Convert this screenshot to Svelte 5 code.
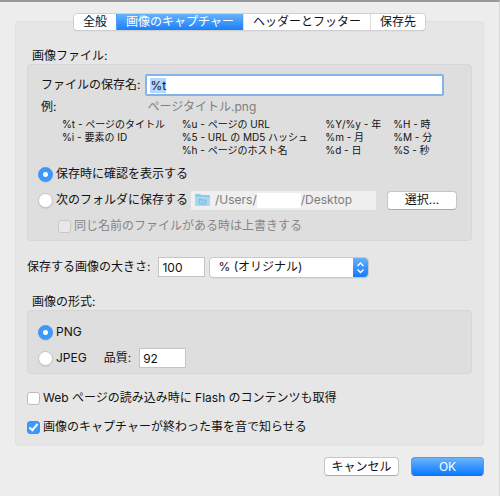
<script>
  import { onMount } from 'svelte';

  const tabs = ['全般', '画像のキャプチャー', 'ヘッダーとフッター', '保存先'];

  const patterns = [
    ['%t - ページのタイトル', '%u - ページの URL', '%Y/%y - 年', '%H - 時'],
    ['%i - 要素の ID', '%5 - URL の MD5 ハッシュ', '%m - 月', '%M - 分'],
    ['', '%h - ページのホスト名', '%d - 日', '%S - 秒'],
  ];

  let activeTab = 1;
  let fileName = '%t';
  let saveMode = 'confirm';
  let overwrite = false;
  let size = '100';
  let format = 'png';
  let quality = '92';
  let loadFlash = false;
  let playSound = true;
  let nameInput;

  onMount(() => {
    nameInput.focus();
    nameInput.select();
  });
</script>

<main>
  <div class="tabs" role="tablist">
    {#each tabs as tab, i}
      <button
        type="button"
        role="tab"
        class="tab"
        class:active={activeTab === i}
        aria-selected={activeTab === i}
        on:click={() => (activeTab = i)}>{tab}</button>
    {/each}
  </div>

  <div class="panel" role="tabpanel">
    <h2>画像ファイル:</h2>
    <section class="group">
      <div class="names">
        <label for="file-name">ファイルの保存名:</label>
        <input id="file-name" class="name-field" type="text" bind:value={fileName} bind:this={nameInput} />
        <span>例:</span>
        <span class="sample">ページタイトル.png</span>
      </div>

      <table>
        <tbody>
          {#each patterns as row}
            <tr>
              {#each row as cell}
                <td>{cell}</td>
              {/each}
            </tr>
          {/each}
        </tbody>
      </table>

      <div class="row">
        <label class="option">
          <input type="radio" name="save" value="confirm" bind:group={saveMode} />
          保存時に確認を表示する
        </label>
      </div>
      <div class="row">
        <label class="option">
          <input type="radio" name="save" value="folder" bind:group={saveMode} />
          次のフォルダに保存する
        </label>
        <div class="path">
          <svg width="15" height="14" viewBox="0 0 15 14" aria-hidden="true">
            <path d="M0 2q0-1 1-1h4q1 0 1 1h8q1 0 1 1v9q0 1-1 1H1q-1 0-1-1z" fill="#8fcbe6" />
            <path d="M0 4h15v8q0 1-1 1H1q-1 0-1-1z" fill="#a5daf0" />
            <path d="M4 6h2l1 1h4v4H4z" fill="#9bd0e8" stroke="#7fbcda" />
          </svg>
          <span>/Users/</span>
          <span class="user"></span>
          <span>/Desktop</span>
        </div>
        <button type="button" class="button choose">選択...</button>
      </div>
      <div class="row nested">
        <label class="option disabled">
          <input type="checkbox" bind:checked={overwrite} disabled />
          同じ名前のファイルがある時は上書きする
        </label>
      </div>
    </section>

    <div class="size-row">
      <label for="size">保存する画像の大きさ:</label>
      <input id="size" class="number" type="text" bind:value={size} />
      <div class="select">
        <select aria-label="単位">
          <option>% (オリジナル)</option>
        </select>
        <svg width="15" height="19" viewBox="0 0 15 19" aria-hidden="true">
          <path d="M4.500 8L7.500 5L10.500 8M4.500 11.500L7.500 14.500L10.500 11.500" fill="none" stroke="#fff" stroke-width="1.400" />
        </svg>
      </div>
    </div>

    <h2>画像の形式:</h2>
    <section class="group formats">
      <div class="row">
        <label class="option">
          <input type="radio" name="format" value="png" bind:group={format} />
          PNG
        </label>
      </div>
      <div class="row">
        <label class="option">
          <input type="radio" name="format" value="jpeg" bind:group={format} />
          JPEG
        </label>
        <label class="quality" for="quality">品質:</label>
        <input id="quality" class="number" type="text" bind:value={quality} />
      </div>
    </section>

    <div class="extras">
      <label class="option">
        <input type="checkbox" bind:checked={loadFlash} />
        Web ページの読み込み時に Flash のコンテンツも取得
      </label>
      <label class="option">
        <input type="checkbox" bind:checked={playSound} />
        画像のキャプチャーが終わった事を音で知らせる
      </label>
    </div>
  </div>

  <footer>
    <button type="button" class="button cancel">キャンセル</button>
    <button type="button" class="button primary">OK</button>
  </footer>
</main>

<style>
  :global(body) {
    margin: 0;
    background: #ededed;
  }

  main {
    box-sizing: border-box;
    min-height: 100vh;
    padding: 12px 15px 20px;
    border-top: 2px solid #999;
    border-right: 1px solid #d6d6d6;
    background: #ededed;
    color: #111;
    font: 12px/16px Inter, "Noto Sans CJK JP", sans-serif;
  }

  button,
  input,
  select {
    box-sizing: border-box;
    margin: 0;
    font: inherit;
    color: inherit;
  }

  .tabs {
    position: relative;
    display: flex;
    width: fit-content;
    margin: 0 auto;
    border-radius: 4px;
    background: #fff;
    box-shadow: 0 0 0 1px #cfcfcf, 0 1px 1px #aaa;
    overflow: hidden;
  }

  .tab {
    height: 16px;
    padding: 0 9px;
    border: 0;
    border-left: 1px solid #ddd;
    background: #fff;
    line-height: 14px;
    white-space: nowrap;
  }

  .tab:first-child {
    border-left: 0;
  }

  .tab.active {
    border-color: #4a9df8;
    background: linear-gradient(#69b1fa, #1a80fb);
    color: #fff;
  }

  .panel {
    margin-top: -9px;
    padding: 26px 11px 10px;
    border: 1px solid #e0e0e0;
    border-radius: 4px;
    background: #e6e6e6;
  }

  h2 {
    margin: 0 0 0 5px;
    font-size: 12px;
    font-weight: 400;
    line-height: 16px;
  }

  .group {
    padding: 9px 10px 1px;
    border: 1px solid #d6d6d6;
    border-radius: 4px;
    background: #dedede;
  }

  .names {
    display: grid;
    grid-template-columns: auto 1fr;
    column-gap: 5px;
    align-items: center;
    padding: 0 17px 0 3px;
  }

  .name-field {
    width: 100%;
    height: 22px;
    padding: 0 3px;
    border: 2px solid #83b3e8;
    border-radius: 2px;
    outline: 0;
    background: #fff;
  }

  .name-field::selection {
    background: #b3d7ff;
    color: #111;
  }

  .sample {
    padding: 3px 2px;
    color: #808080;
  }

  table {
    width: 100%;
    padding-left: 24px;
    border-spacing: 0;
    table-layout: fixed;
    font-size: 10px;
    line-height: 13px;
  }

  td {
    padding: 0;
    white-space: nowrap;
  }

  td:nth-child(1) {
    width: 30%;
  }

  td:nth-child(2) {
    width: 36%;
  }

  td:nth-child(3) {
    width: 17%;
  }

  table + .row {
    margin-top: 4px;
  }

  .row {
    display: flex;
    align-items: center;
    height: 26px;
  }

  .option {
    display: flex;
    align-items: center;
    gap: 3px;
    white-space: nowrap;
  }

  input[type='radio'] {
    appearance: none;
    width: 15px;
    height: 15px;
    border: 1px solid #c4c4c4;
    border-radius: 50%;
    background: #fff;
    box-shadow: 0 1px 1px #ccc;
  }

  input[type='radio']:checked {
    border-color: #3b93f8;
    background: radial-gradient(circle, #fff 2px, #3b99fc 3px);
  }

  input[type='checkbox'] {
    appearance: none;
    display: grid;
    place-items: center;
    width: 13px;
    height: 13px;
    border: 1px solid #bbb;
    border-radius: 3px;
    background: #fff;
  }

  input[type='checkbox']:checked {
    border-color: #3b93f8;
    background: #3b99fc;
  }

  input[type='checkbox']:checked::after {
    content: '';
    width: 3px;
    height: 7px;
    margin-bottom: 2px;
    border: solid #fff;
    border-width: 0 2px 2px 0;
    transform: rotate(40deg);
  }

  input[type='checkbox']:disabled {
    border-color: #c8c8c8;
    background: #e8e8e8;
  }

  .disabled {
    color: #868686;
  }

  .nested {
    padding-left: 20px;
  }

  .path {
    display: flex;
    flex: 1;
    align-items: center;
    height: 19px;
    margin: 0 11px 0 3px;
    padding-left: 4px;
    background: #efefef;
    color: #7d7d7d;
  }

  .path svg {
    margin-right: 5px;
  }

  .user {
    width: 44px;
    height: 15px;
    background: #fff;
  }

  .button {
    height: 19px;
    padding: 0 9px;
    border: 1px solid #c6c6c6;
    border-bottom-color: #aaa;
    border-radius: 4px;
    background: #fff;
    line-height: 16px;
  }

  .choose {
    width: 70px;
    margin-right: 4px;
  }

  .size-row {
    display: flex;
    align-items: center;
    margin: 16px 0 17px;
  }

  .number {
    width: 47px;
    height: 20px;
    padding: 0 3px;
    border: 1px solid #c4c4c4;
    background: #fff;
  }

  .size-row .number {
    margin: 0 5px 0 8px;
  }

  .select {
    display: flex;
    width: 158px;
    height: 19px;
    border-radius: 4px;
    background: #fff;
    box-shadow: 0 0 0 1px #c8c8c8, 0 1px 1px #999;
    overflow: hidden;
  }

  .select select {
    appearance: none;
    flex: 1;
    padding: 0 8px;
    border: 0;
    background: #fff;
  }

  .select svg {
    background: linear-gradient(#65b0fa, #147bfb);
  }

  .formats {
    padding: 8px 10px 2px;
  }

  .quality {
    margin: 0 8px 0 17px;
  }

  .extras {
    display: grid;
    gap: 13px;
    margin-top: 16px;
  }

  footer {
    display: flex;
    justify-content: flex-end;
    gap: 12px;
    margin-top: 11px;
  }

  .cancel {
    width: 75px;
    padding: 0;
  }

  .primary {
    width: 73px;
    border-color: #4a9cf5;
    border-bottom-color: #1470e8;
    background: linear-gradient(#6bb3fa, #0a7aff);
    color: #fff;
  }
</style>
